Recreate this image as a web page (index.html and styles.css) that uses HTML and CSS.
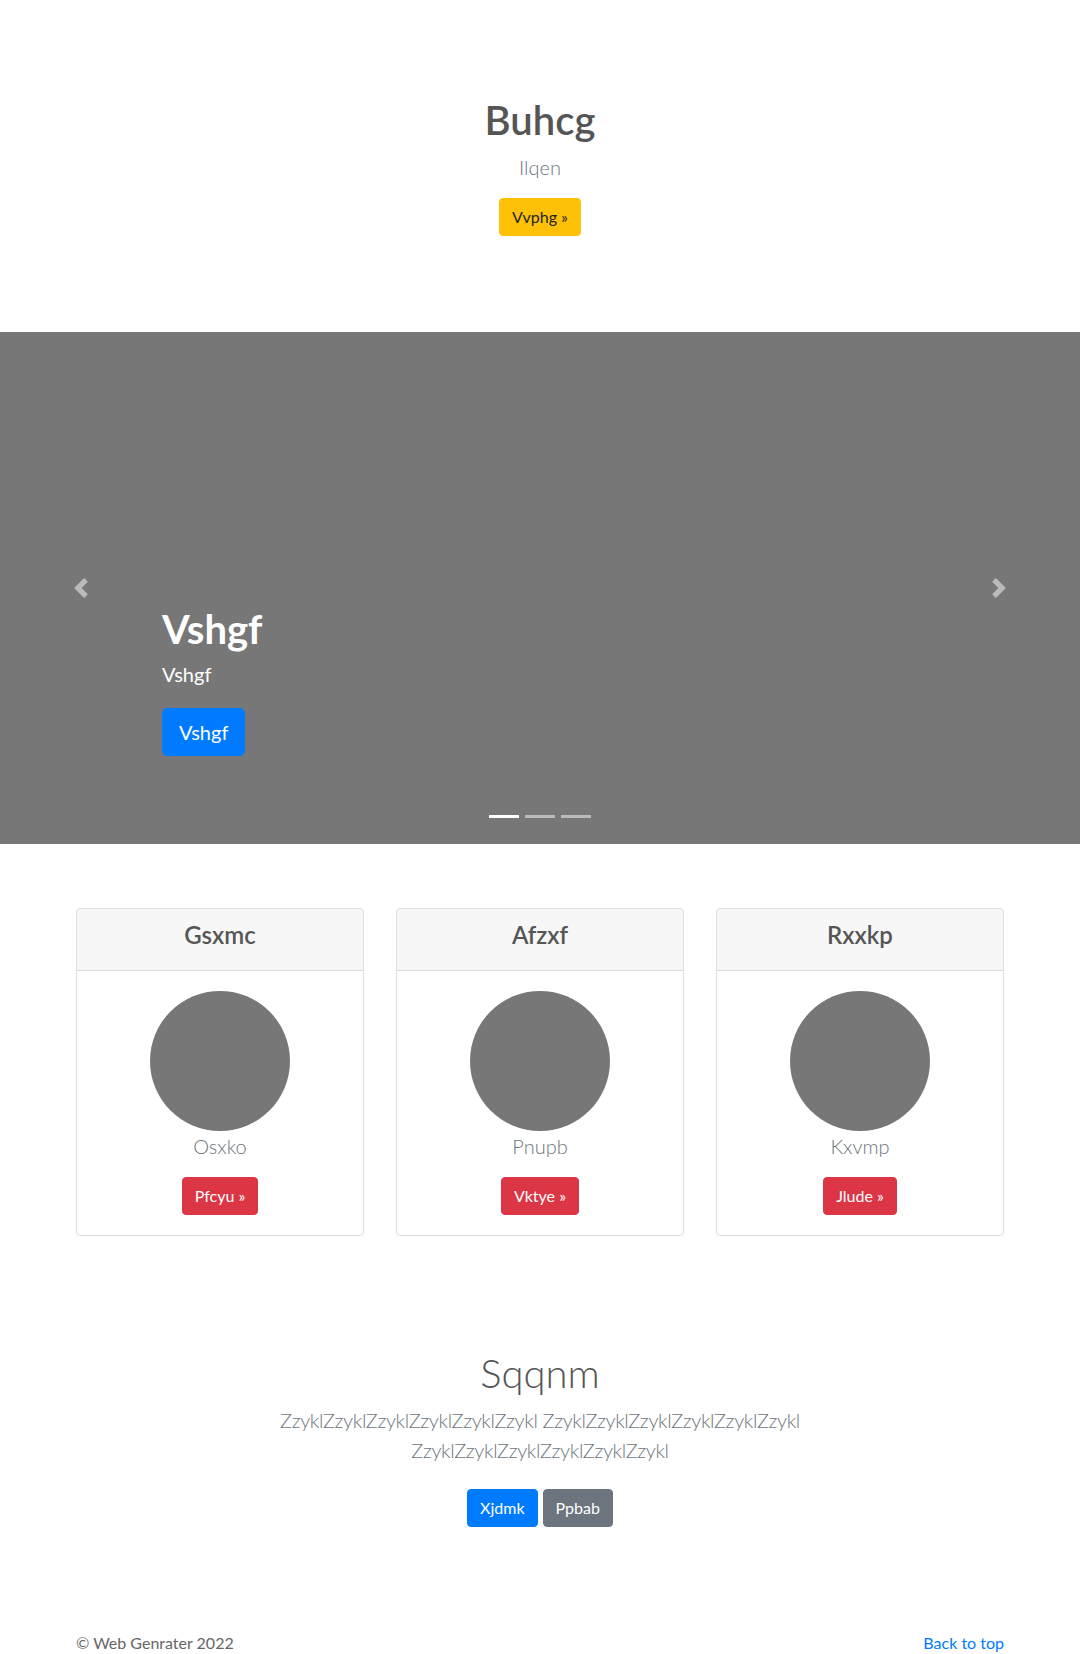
FILE: index.html
```html
<!DOCTYPE html>
<html lang="en">
<head>
<meta charset="utf-8">
<title>Buhcg</title>
<link rel="stylesheet" href="styles.css">
</head>
<body>
<header class="hero">
  <h1 class="hero-title">Buhcg</h1>
  <p class="lead muted">Ilqen</p>
  <a class="btn btn-warning" href="#">Vvphg &raquo;</a>
</header>

<section class="carousel">
  <a class="carousel-control prev" href="#">
    <svg width="20" height="20" viewBox="0 0 8 8" fill="#fff"><path d="M5.25 0l-4 4 4 4 1.5-1.5L4.25 4l2.5-2.5L5.25 0z"/></svg>
  </a>
  <div class="carousel-caption">
    <h1 class="caption-title">Vshgf</h1>
    <p class="caption-text">Vshgf</p>
    <a class="btn btn-lg btn-primary" href="#">Vshgf</a>
  </div>
  <a class="carousel-control next" href="#">
    <svg width="20" height="20" viewBox="0 0 8 8" fill="#fff"><path d="M2.75 0l-1.5 1.5L3.75 4l-2.5 2.5L2.75 8l4-4-4-4z"/></svg>
  </a>
  <ol class="indicators">
    <li class="active"></li>
    <li></li>
    <li></li>
  </ol>
</section>

<section class="cards">
  <div class="card">
    <div class="card-header"><h4 class="card-title">Gsxmc</h4></div>
    <div class="card-body">
      <div class="circle"></div>
      <p class="lead muted card-text">Osxko</p>
      <a class="btn btn-danger" href="#">Pfcyu &raquo;</a>
    </div>
  </div>
  <div class="card">
    <div class="card-header"><h4 class="card-title">Afzxf</h4></div>
    <div class="card-body">
      <div class="circle"></div>
      <p class="lead muted card-text">Pnupb</p>
      <a class="btn btn-danger" href="#">Vktye &raquo;</a>
    </div>
  </div>
  <div class="card">
    <div class="card-header"><h4 class="card-title">Rxxkp</h4></div>
    <div class="card-body">
      <div class="circle"></div>
      <p class="lead muted card-text">Kxvmp</p>
      <a class="btn btn-danger" href="#">Jlude &raquo;</a>
    </div>
  </div>
</section>

<section class="intro">
  <h1 class="intro-title">Sqqnm</h1>
  <p class="lead muted intro-text">ZzyklZzyklZzyklZzyklZzyklZzykl ZzyklZzyklZzyklZzyklZzyklZzykl ZzyklZzyklZzyklZzyklZzyklZzykl</p>
  <div class="intro-actions">
    <a class="btn btn-primary" href="#">Xjdmk</a>
    <a class="btn btn-secondary" href="#">Ppbab</a>
  </div>
</section>

<footer class="footer">
  <p class="copy">&copy; Web Genrater 2022</p>
  <a class="back" href="#">Back to top</a>
</footer>
</body>
</html>
```

FILE: styles.css
```css
* { box-sizing: border-box; }

body {
  margin: 0;
  font-family: "Lato", "Open Sans", "Liberation Sans", sans-serif;
  font-size: 16px;
  line-height: 1.5;
  color: #212529;
  background: #fff;
}

a { text-decoration: none; }

.muted { color: #6c757d; }

.lead {
  font-size: 20px;
  line-height: 30px;
  font-weight: 300;
}

.btn {
  display: inline-block;
  font-size: 16px;
  line-height: 24px;
  padding: 6px 12px;
  border: 1px solid transparent;
  border-radius: 4px;
  color: #fff;
}

.btn-lg {
  font-size: 20px;
  line-height: 30px;
  padding: 8px 16px;
  border-radius: 5px;
}

.btn-warning { background: #ffc107; border-color: #ffc107; color: #212529; }
.btn-primary { background: #007bff; border-color: #007bff; }
.btn-secondary { background: #6c757d; border-color: #6c757d; }
.btn-danger { background: #dc3545; border-color: #dc3545; }

/* Hero */
.hero {
  text-align: center;
  padding: 96px 0;
}

.hero-title {
  margin: 0 0 8px;
  font-size: 40px;
  line-height: 48px;
  font-weight: 600;
  color: #555;
}

.hero .lead { margin: 0 0 16px; }

/* Carousel */
.carousel {
  position: relative;
  height: 512px;
  background: #777;
}

.carousel-control {
  position: absolute;
  top: 0;
  bottom: 0;
  width: 15%;
  display: flex;
  align-items: center;
  justify-content: center;
  opacity: .5;
}

.carousel-control.prev { left: 0; }
.carousel-control.next { right: 0; }

.carousel-caption {
  position: absolute;
  left: 15%;
  right: 15%;
  bottom: 48px;
  padding: 20px 0;
  color: #fff;
  display: flex;
  flex-direction: column;
  align-items: flex-start;
}

.caption-title {
  margin: 0 0 6px;
  font-size: 40px;
  line-height: 48px;
  font-weight: 700;
}

.caption-text {
  margin: 0 0 19px;
  font-size: 20px;
  line-height: 30px;
}

.carousel-caption .btn { margin-bottom: 20px; }

.indicators {
  position: absolute;
  left: 0;
  right: 0;
  bottom: 0;
  margin: 0 0 16px;
  padding: 0;
  list-style: none;
  display: flex;
  justify-content: center;
}

.indicators li {
  width: 30px;
  height: 23px;
  margin: 0 3px;
  border-top: 10px solid transparent;
  border-bottom: 10px solid transparent;
  background: #fff;
  background-clip: padding-box;
  opacity: .5;
}

.indicators li.active { opacity: 1; }

/* Cards */
.cards {
  width: 928px;
  margin: 0 auto;
  padding-top: 64px;
  display: grid;
  grid-template-columns: repeat(3, 1fr);
  gap: 32px;
}

.card {
  border: 1px solid rgba(0, 0, 0, .125);
  border-radius: 4px;
  text-align: center;
  overflow: hidden;
}

.card-header {
  background: rgba(0, 0, 0, .03);
  border-bottom: 1px solid rgba(0, 0, 0, .125);
  padding: 12px 20px;
}

.card-title {
  margin: 0 0 8px;
  font-size: 24px;
  line-height: 28.8px;
  font-weight: 600;
  color: #555;
}

.card-body {
  padding: 20px;
  display: flex;
  flex-direction: column;
  align-items: center;
}

.circle {
  width: 140px;
  height: 140px;
  border-radius: 50%;
  background: #777;
}

.card-text { margin: 0 0 16px; }

/* Intro */
.intro {
  text-align: center;
  padding-top: 113px;
}

.intro-title {
  margin: 0 0 8px;
  font-size: 40px;
  line-height: 48px;
  font-weight: 300;
  color: #555;
}

.intro-text {
  max-width: 610px;
  margin: 0 auto 16px;
  letter-spacing: -0.35px;
}

.intro-actions {
  display: flex;
  justify-content: center;
  gap: 5px;
  padding-top: 8px;
}

/* Footer */
.footer {
  width: 928px;
  margin: 0 auto;
  padding: 104px 0 40px;
  display: flex;
  justify-content: space-between;
  align-items: baseline;
}

.copy {
  margin: 0;
  color: #666;
}

.back { color: #007bff; }
```
